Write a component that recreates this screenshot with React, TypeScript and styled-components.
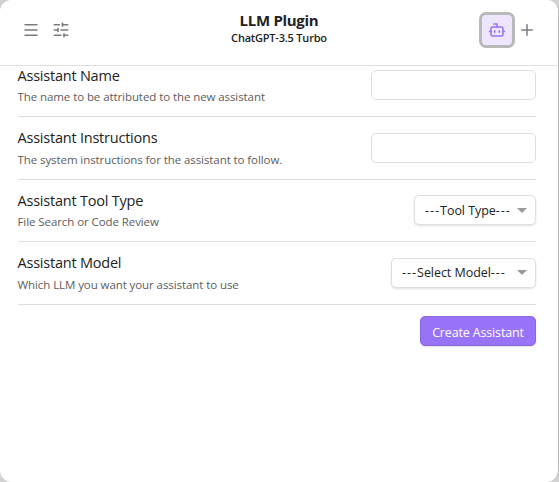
import React from "react";
import styled, { createGlobalStyle } from "styled-components";
import { Bot, Menu, Plus, SlidersHorizontal } from "lucide-react";

const GlobalStyle = createGlobalStyle`
  *, *::before, *::after { box-sizing: border-box; }
  html, body { margin: 0; padding: 0; overflow: hidden; background: #d2d2d2; }
  body { font-family: "Segoe UI", "Open Sans", "Noto Sans", sans-serif; color: #222; }
`;

const Modal = styled.main`
  width: 559px;
  height: 482px;
  display: flex;
  flex-direction: column;
  background: #fff;
  border-right: 1px solid #b9b9b9;
  border-radius: 12px;
  overflow: hidden;
`;

const Header = styled.header`
  position: relative;
  z-index: 1;
  flex: none;
  height: 66px;
  display: grid;
  grid-template-columns: 1fr auto 1fr;
  padding: 0 22px;
  background: #fff;
  border-bottom: 1px solid #dedede;
`;

const IconGroup = styled.div<{ $end?: boolean }>`
  display: flex;
  align-items: center;
  height: 60px;
  gap: ${(p) => (p.$end ? "3px" : "12px")};
  justify-content: ${(p) => (p.$end ? "flex-end" : "flex-start")};
`;

const IconButton = styled.button<{ $active?: boolean }>`
  display: flex;
  align-items: center;
  justify-content: center;
  width: ${(p) => (p.$active ? "36px" : "18px")};
  height: ${(p) => (p.$active ? "36px" : "18px")};
  padding: 0;
  border: ${(p) => (p.$active ? "3px solid #b9b9b9" : "0")};
  border-radius: ${(p) => (p.$active ? "7px" : "0")};
  background: ${(p) => (p.$active ? "#eee6fe" : "transparent")};
  color: ${(p) => (p.$active ? "#9873f7" : "#7c7c7c")};
`;

const Heading = styled.div`
  padding-top: 10px;
  text-align: center;
  white-space: nowrap;
`;

const Title = styled.h1`
  margin: 0;
  font-size: 15px;
  line-height: 20px;
  font-weight: 700;
  letter-spacing: -0.3px;
`;

const Subtitle = styled.div`
  font-size: 11px;
  line-height: 16px;
  font-weight: 600;
  letter-spacing: -0.2px;
`;

const Settings = styled.section`
  display: grid;
  grid-template-rows: repeat(4, 62.5px);
  margin: -11.3px 22px 0 17.5px;
`;

const SettingRow = styled.div`
  display: flex;
  align-items: center;
  justify-content: space-between;
  border-bottom: 1px solid #dedede;
`;

const Name = styled.div`
  font-size: 14.5px;
  line-height: 20px;
  letter-spacing: -0.22px;
`;

const Description = styled.div`
  padding-top: 2.5px;
  margin-bottom: -0.5px;
  font-size: 11.5px;
  line-height: 17px;
  letter-spacing: -0.08px;
  color: #5c5c5c;
`;

const TextInput = styled.input`
  width: 165px;
  height: 30px;
  border: 1px solid #dedede;
  border-radius: 5px;
  background: #fff;
`;

const Dropdown = styled.button<{ $width: number }>`
  display: flex;
  align-items: center;
  justify-content: space-between;
  width: ${(p) => p.$width}px;
  height: 30px;
  padding: 0 8px 0 10px;
  border: 1px solid #dedede;
  border-radius: 5px;
  background: #fff;
  box-shadow: 0 1px 2px rgba(0, 0, 0, 0.12);
  color: #222;
  font: 12.5px "Segoe UI", "Open Sans", sans-serif;
  letter-spacing: -0.05px;
  white-space: nowrap;
`;

const Dashes = styled.span`
  letter-spacing: 1px;
`;

const Caret = styled.span`
  border: 5px solid transparent;
  border-top-color: #999;
  border-bottom: 0;
`;

const Actions = styled.div`
  display: flex;
  justify-content: flex-end;
  padding: 11.3px 22px 0;
`;

const CreateButton = styled.button`
  width: 116px;
  height: 30px;
  padding: 2px 0 0;
  border: 1px solid #8868df;
  border-radius: 5px;
  background: #9873f7;
  box-shadow: 0 1px 2px rgba(0, 0, 0, 0.12);
  color: #fff;
  font: 12.5px "Segoe UI", "Open Sans", sans-serif;
  letter-spacing: -0.15px;
  white-space: nowrap;
`;

function Select({ label, width }: { label: string; width: number }) {
  return (
    <Dropdown $width={width}>
      <span><Dashes>---</Dashes>{label}<Dashes>---</Dashes></span>
      <Caret />
    </Dropdown>
  );
}

const rows = [
  { name: "Assistant Name", description: "The name to be attributed to the new assistant", control: <TextInput aria-label="Assistant Name" /> },
  { name: "Assistant Instructions", description: "The system instructions for the assistant to follow.", control: <TextInput aria-label="Assistant Instructions" /> },
  { name: "Assistant Tool Type", description: "File Search or Code Review", control: <Select label="Tool Type" width={122} /> },
  { name: "Assistant Model", description: "Which LLM you want your assistant to use", control: <Select label="Select Model" width={145} /> },
];

export default function App() {
  return (
    <>
      <GlobalStyle />
      <Modal>
        <Header>
          <IconGroup>
            <IconButton aria-label="Menu"><Menu size={18} strokeWidth={2} /></IconButton>
            <IconButton aria-label="Settings"><SlidersHorizontal size={18} strokeWidth={2.1} /></IconButton>
          </IconGroup>
          <Heading>
            <Title>LLM Plugin</Title>
            <Subtitle>ChatGPT-3.5 Turbo</Subtitle>
          </Heading>
          <IconGroup $end>
            <IconButton $active aria-label="Assistants"><Bot size={18} strokeWidth={2.1} /></IconButton>
            <IconButton aria-label="New"><Plus size={18} strokeWidth={2} /></IconButton>
          </IconGroup>
        </Header>
        <Settings>
          {rows.map((row) => (
            <SettingRow key={row.name}>
              <div>
                <Name>{row.name}</Name>
                <Description>{row.description}</Description>
              </div>
              {row.control}
            </SettingRow>
          ))}
        </Settings>
        <Actions>
          <CreateButton>Create Assistant</CreateButton>
        </Actions>
      </Modal>
    </>
  );
}
